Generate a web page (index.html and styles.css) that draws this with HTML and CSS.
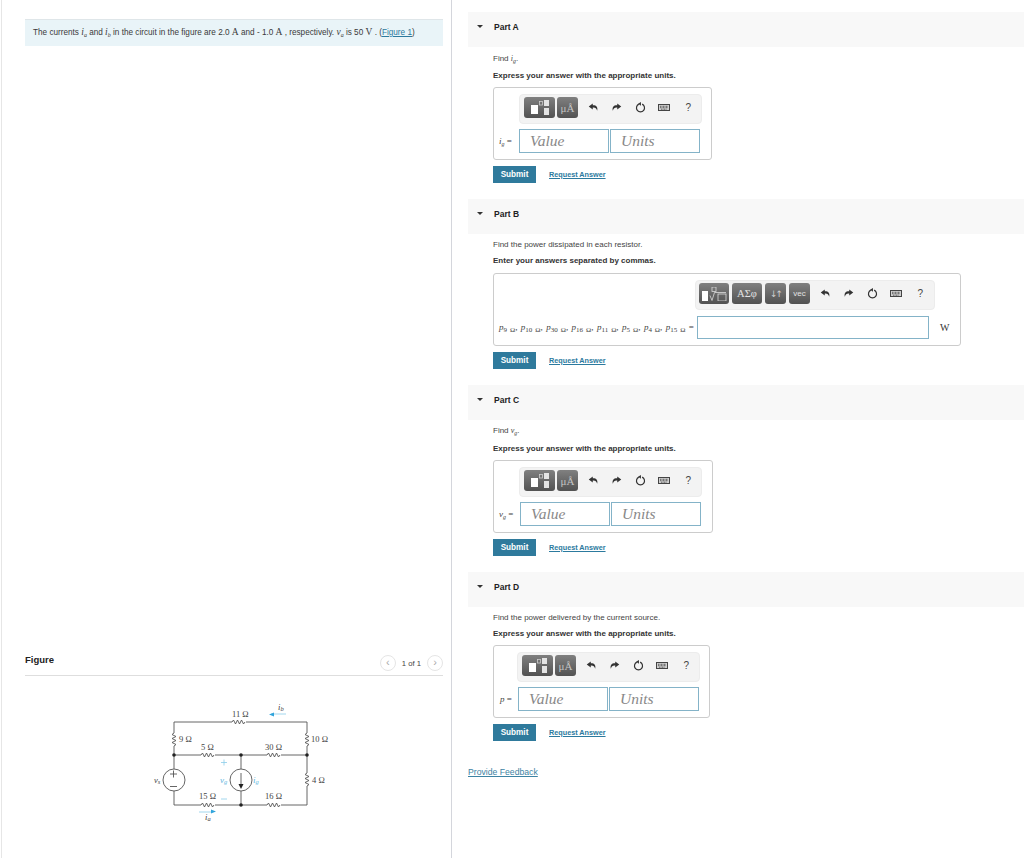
FILE: index.html
```html
<!DOCTYPE html>
<html lang="en">
<head>
<meta charset="utf-8">
<title>Circuit problem</title>
<link rel="stylesheet" href="styles.css">
</head>
<body>
<svg class="defs" width="0" height="0" aria-hidden="true">
  <symbol id="i-undo" viewBox="0 0 12 12"><path d="M5.2 1.6 0.8 5 5.2 8.2V6c2.4-.3 4 .6 4.8 3.6C11 5.6 9.200 3.500 5.200 3.600z"/></symbol>
  <symbol id="i-redo" viewBox="0 0 12 12"><path d="M6.800 1.600 11.200 5 6.800 8.200V6C4.400 5.700 2.800 6.600 2 9.600 1 5.600 2.800 3.500 6.800 3.600z"/></symbol>
  <symbol id="i-reset" viewBox="0 0 12 12"><path d="M4.200 2.300A4.400 4.400 0 1 0 7.800 2.300" fill="none" stroke="currentColor" stroke-width="1.300"/><path d="M6.500 0 6.500 4 3.400 2z"/></symbol>
  <symbol id="i-kbd" viewBox="0 0 12 7"><rect x=".5" y=".5" width="11" height="6" fill="#cfcfcf" stroke="#444"/><path d="M2 2.300h8M2 3.700h8M3 5.200h6" stroke="#444" stroke-width=".8" stroke-dasharray="1 .5"/></symbol>
  <symbol id="i-tpl" viewBox="0 0 18 15"><rect x="0" y="5" width="7" height="9" fill="#fff"/><rect x="8.500" y="1.500" width="3" height="3.500" fill="none" stroke="#ccc" stroke-width=".8"/><rect x="13" y="0" width="5" height="6" fill="#e4e4e4"/><rect x="13" y="8" width="5" height="7" fill="#e4e4e4"/></symbol>
  <symbol id="i-root" viewBox="0 0 26 14"><rect x="1" y="4" width="6" height="10" fill="#fff"/><rect x="11" y="0" width="4" height="4.500" fill="none" stroke="#ddd" stroke-width=".8"/><path d="M9 8.500 11 13.500 13.500 5.500H25" fill="none" stroke="#ddd" stroke-width=".8"/><rect x="17" y="7" width="8" height="7" fill="none" stroke="#ddd" stroke-width=".8"/></symbol>
</svg>

<div class="app">
  <section class="left">
    <div class="statement">
      <p>The currents <i class="m">i</i><sub class="m">a</sub> and <i class="m">i</i><sub class="m">b</sub> in the circuit in the figure are 2.0 <span class="u">A</span> and - 1.0 <span class="u">A</span> , respectively. <i class="m">v</i><sub class="m">a</sub> is 50 <span class="u">V</span> . (<a href="#figure">Figure 1</a>)</p>
    </div>
    <div class="figure" id="figure">
      <div class="figure-head">
        <h2>Figure</h2>
        <div class="pager">
          <span class="round">&lsaquo;</span>
          <span class="count">1 of 1</span>
          <span class="round">&rsaquo;</span>
        </div>
      </div>
      <svg class="circuit" width="220" height="135" viewBox="130 695 220 135">
        <g class="wire">
          <path d="M174 733V722H232M246 722H307V733M307 746V773M307 786V805H281M267 805H241M241 805H215M201 805H174V791M174 769V746M174 755H201M215 755H267M281 755H307M241 755V769M241 791V805"/>
          <path d="M232 722l1.500-2 2 4 2-4 2 4 2-4 2 4 1.500-2"/>
          <path d="M201 755l1.500-2 2 4 2-4 2 4 2-4 2 4 1.500-2"/>
          <path d="M267 755l1.500-2 2 4 2-4 2 4 2-4 2 4 1.500-2"/>
          <path d="M201 805l1.500-2 2 4 2-4 2 4 2-4 2 4 1.500-2"/>
          <path d="M267 805l1.500-2 2 4 2-4 2 4 2-4 2 4 1.500-2"/>
          <path d="M174 733l-2 1.500 4 2-4 2 4 2-4 2 4 2-2 1.500"/>
          <path d="M307 733l-2 1.500 4 2-4 2 4 2-4 2 4 2-2 1.500"/>
          <path d="M307 773l-2 1.500 4 2-4 2 4 2-4 2 4 2-2 1.500"/>
          <circle cx="174" cy="780" r="11"/>
          <circle cx="241" cy="780" r="11"/>
          <path d="M241 773V785"/>
          <path d="M170 774h7M173.500 770.500v7M170 786.500h7"/>
        </g>
        <path class="fill-dark" d="M238.500 784h5L241 789z"/>
        <circle class="fill-dark" cx="174" cy="755" r="1.800"/>
        <circle class="fill-dark" cx="241" cy="755" r="1.800"/>
        <circle class="fill-dark" cx="307" cy="755" r="1.800"/>
        <circle class="fill-dark" cx="241" cy="805" r="1.800"/>
        <g class="blue-line">
          <path d="M271 714H286"/>
          <path d="M199 812H212"/>
          <path d="M221 762.500h6M224 759.500v6M221 799h6"/>
        </g>
        <path class="fill-blue" d="M269 714.500l5-2v4zM216 811.500l-5-2v4z"/>
        <g class="lbl">
          <text x="232" y="717">11 Ω</text>
          <text x="179" y="742">9 Ω</text>
          <text x="311" y="742">10 Ω</text>
          <text x="201" y="750">5 Ω</text>
          <text x="265" y="750">30 Ω</text>
          <text x="199" y="799">15 Ω</text>
          <text x="265" y="799">16 Ω</text>
          <text x="312" y="783">4 Ω</text>
          <text class="it" x="154" y="783">v<tspan class="sb" dy="1">s</tspan></text>
          <text class="it" x="278" y="710">i<tspan class="sb" dy="1">b</tspan></text>
          <text class="it" x="205" y="820">i<tspan class="sb" dy="1">a</tspan></text>
          <text class="it cy" x="220" y="783">v<tspan class="sb" dy="1">g</tspan></text>
          <text class="it cy" x="253" y="783">i<tspan class="sb" dy="1">g</tspan></text>
        </g>
      </svg>
    </div>
  </section>

  <main class="right">
    <section class="part part-a">
      <div class="part-head"><span class="caret"></span><h3>Part A</h3></div>
      <div class="part-body">
        <p class="prompt">Find <i class="m">i</i><sub class="m">g</sub>.</p>
        <p class="instr">Express your answer with the appropriate units.</p>
        <div class="answer box-a">
          <div class="toolbar tb-unit">
            <span class="btn b-tpl"><svg width="18" height="15"><use href="#i-tpl"/></svg></span>
            <span class="btn b-mu">μÅ</span>
            <span class="tools"><svg class="t1" width="11" height="11"><use href="#i-undo"/></svg><svg class="t1" width="11" height="11"><use href="#i-redo"/></svg><svg class="t1" width="11" height="11"><use href="#i-reset"/></svg><svg class="t1" width="12" height="7"><use href="#i-kbd"/></svg><span class="q">?</span></span>
          </div>
          <div class="entry">
            <span class="lab"><i class="m">i</i><sub class="m">g</sub> =</span>
            <span class="field">Value</span>
            <span class="field">Units</span>
          </div>
        </div>
        <div class="actions"><button class="submit">Submit</button><a class="req" href="#a">Request Answer</a></div>
      </div>
    </section>

    <section class="part part-b">
      <div class="part-head"><span class="caret"></span><h3>Part B</h3></div>
      <div class="part-body">
        <p class="prompt">Find the power dissipated in each resistor.</p>
        <p class="instr">Enter your answers separated by commas.</p>
        <div class="answer box-b">
          <div class="toolbar tb-wide">
            <span class="btn b-root"><svg width="26" height="14"><use href="#i-root"/></svg></span>
            <span class="btn b-sym">ΑΣφ</span>
            <span class="btn b-arr">↓↑</span>
            <span class="btn b-vec">vec</span>
            <span class="tools"><svg class="t1" width="11" height="11"><use href="#i-undo"/></svg><svg class="t1" width="11" height="11"><use href="#i-redo"/></svg><svg class="t1" width="11" height="11"><use href="#i-reset"/></svg><svg class="t1" width="12" height="7"><use href="#i-kbd"/></svg><span class="q">?</span></span>
          </div>
          <div class="entry entry-b">
            <span class="lab lab-b"><i class="m">p</i><sub class="m">9 Ω</sub>, <i class="m">p</i><sub class="m">10 Ω</sub>, <i class="m">p</i><sub class="m">30 Ω</sub>, <i class="m">p</i><sub class="m">16 Ω</sub>, <i class="m">p</i><sub class="m">11 Ω</sub>, <i class="m">p</i><sub class="m">5 Ω</sub>, <i class="m">p</i><sub class="m">4 Ω</sub>, <i class="m">p</i><sub class="m">15 Ω</sub> =</span>
            <span class="field field-b"></span>
            <span class="unit-w">W</span>
          </div>
        </div>
        <div class="actions"><button class="submit">Submit</button><a class="req" href="#b">Request Answer</a></div>
      </div>
    </section>

    <section class="part part-c">
      <div class="part-head"><span class="caret"></span><h3>Part C</h3></div>
      <div class="part-body">
        <p class="prompt">Find <i class="m">v</i><sub class="m">g</sub>.</p>
        <p class="instr">Express your answer with the appropriate units.</p>
        <div class="answer box-c">
          <div class="toolbar tb-unit">
            <span class="btn b-tpl"><svg width="18" height="15"><use href="#i-tpl"/></svg></span>
            <span class="btn b-mu">μÅ</span>
            <span class="tools"><svg class="t1" width="11" height="11"><use href="#i-undo"/></svg><svg class="t1" width="11" height="11"><use href="#i-redo"/></svg><svg class="t1" width="11" height="11"><use href="#i-reset"/></svg><svg class="t1" width="12" height="7"><use href="#i-kbd"/></svg><span class="q">?</span></span>
          </div>
          <div class="entry">
            <span class="lab"><i class="m">v</i><sub class="m">g</sub> =</span>
            <span class="field">Value</span>
            <span class="field">Units</span>
          </div>
        </div>
        <div class="actions"><button class="submit">Submit</button><a class="req" href="#c">Request Answer</a></div>
      </div>
    </section>

    <section class="part part-d">
      <div class="part-head"><span class="caret"></span><h3>Part D</h3></div>
      <div class="part-body">
        <p class="prompt">Find the power delivered by the current source.</p>
        <p class="instr">Express your answer with the appropriate units.</p>
        <div class="answer box-d">
          <div class="toolbar tb-unit">
            <span class="btn b-tpl"><svg width="18" height="15"><use href="#i-tpl"/></svg></span>
            <span class="btn b-mu">μÅ</span>
            <span class="tools"><svg class="t1" width="11" height="11"><use href="#i-undo"/></svg><svg class="t1" width="11" height="11"><use href="#i-redo"/></svg><svg class="t1" width="11" height="11"><use href="#i-reset"/></svg><svg class="t1" width="12" height="7"><use href="#i-kbd"/></svg><span class="q">?</span></span>
          </div>
          <div class="entry">
            <span class="lab"><i class="m">p</i> =</span>
            <span class="field">Value</span>
            <span class="field">Units</span>
          </div>
        </div>
        <div class="actions"><button class="submit">Submit</button><a class="req" href="#d">Request Answer</a></div>
      </div>
    </section>

    <a class="feedback" href="#f">Provide Feedback</a>
  </main>
</div>
</body>
</html>
```

FILE: styles.css
```css
* { box-sizing: border-box; }
html, body { margin: 0; padding: 0; background: #fff; }
body { font-family: "Liberation Sans", Arial, sans-serif; color: #333; font-size: 8px; overflow: hidden; }
.defs { display: block; height: 0; }
p, h2, h3 { margin: 0; }
a { color: #2c7a9e; }
.app { display: flex; width: 1024px; height: 858px; }

.left { width: 451px; height: 858px; margin-left: 1px; border-left: 1px solid #e6e6e6; border-right: 1px solid #d4d6dc; padding: 19px 8px 0 23px; flex: none; display: flex; flex-direction: column; }
.statement { height: 27px; background: #e9f4f8; border-top: 1px solid #dfe6e9; padding: 0 8px 2px; display: flex; align-items: center; font-size: 8.200px; color: #3a3a3a; white-space: nowrap; }
.m { font-family: "Liberation Serif", serif; font-style: italic; }
.statement .m { font-size: 9.500px; }
sub.m { font-size: 6px !important; line-height: 0; vertical-align: -2px; font-style: italic; }
.u { font-family: "Liberation Serif", serif; font-size: 9.500px; }

.figure { margin-top: 606px; }
.figure-head { height: 24px; border-bottom: 1px solid #dedede; display: flex; justify-content: space-between; align-items: flex-start; }
.figure-head h2 { font-size: 9.500px; line-height: 16px; color: #222; }
.pager { display: flex; align-items: center; gap: 6px; margin-top: 3px; color: #444; font-size: 7.700px; }
.round { width: 16px; height: 16px; border: 1px solid #e5e5e5; border-radius: 50%; display: flex; align-items: center; justify-content: center; color: #aaa; font-size: 11px; line-height: 1; padding-bottom: 2px; }
.circuit { display: block; margin: 19px 0 0 105px; }
.wire { fill: none; stroke: #555; stroke-width: .9; }
.fill-dark { fill: #222; }
.fill-blue { fill: #31a4dc; }
.blue-line { stroke: #8ccdea; stroke-width: .8; fill: none; }
.lbl { font-family: "Liberation Serif", serif; font-size: 8.500px; fill: #444; }
.lbl .it { font-style: italic; }
.lbl .cy { fill: #5fb6de; font-size: 9px; }
.lbl .sb { font-size: 6.500px; }

.right { flex: 1; min-width: 0; padding: 12px 0 0 16px; display: flex; flex-direction: column; }
.part-head { height: 35px; background: #f8f8f8; display: flex; align-items: flex-start; padding: 10px 0 0 9px; }
.caret { width: 0; height: 0; border-left: 3px solid transparent; border-right: 3px solid transparent; border-top: 3.500px solid #333; margin: 3px 11px 0 0; }
.part-head h3 { font-size: 8.500px; line-height: 11px; color: #222; font-weight: bold; }
.part-body { padding-left: 25px; padding-top: 1px; }
.part-a .part-body { padding-top: 0; }
.prompt { font-size: 8px; line-height: 10px; color: #444; padding-top: 5px; }
.instr { font-size: 8px; line-height: 10px; font-weight: bold; color: #333; padding-top: 2px; }
.part-a .prompt { padding-top: 7px; height: 22px; }
.part-a .instr { height: 18px; }
.part-b .prompt { height: 19px; }
.part-b .instr { height: 19px; }
.part-c .prompt { height: 21px; }
.part-c .instr { height: 18px; }
.part-d .prompt { height: 19px; }
.part-d .instr { height: 18px; }

.answer { border: 1px solid #ccc; border-radius: 3px; height: 73px; padding: 6px 8px 0 6px; display: flex; flex-direction: column; align-items: flex-start; }
.box-a { width: 219px; padding-left: 25px; }
.box-b { width: 468px; padding-left: 5px; }
.box-c { width: 220px; padding-left: 25px; }
.box-d { width: 217px; padding-left: 23px; }

.toolbar { height: 30px; background: #f3f3f3; border: 1px solid #ececec; border-radius: 4px; display: flex; align-items: center; padding: 0 4px 3px; gap: 2px; }
.tb-unit { width: 183px; }
.tb-wide { width: 240px; margin-left: 196px; padding-left: 3px; gap: 3px; }
.btn { height: 21px; border-radius: 3px; background: linear-gradient(#808080, #525252); display: flex; align-items: center; justify-content: center; color: #e2e2e2; font-family: "Liberation Serif", serif; font-size: 10px; flex: none; }
.b-tpl { width: 31px; }
.b-mu { width: 21px; color: #c4c4c4; font-size: 11px; }
.b-root { width: 30px; }
.b-sym { width: 30px; font-size: 10.500px; }
.b-arr { width: 21px; font-family: "DejaVu Sans", sans-serif; font-size: 9px; color: #cfcfcf; letter-spacing: -2px; }
.b-vec { width: 21px; font-family: "Liberation Sans", sans-serif; font-size: 8px; }
.tools { display: flex; align-items: center; gap: 12.300px; margin-left: 8px; color: #333; fill: #333; }
.tb-wide .tools { margin-left: 7px; }
.t1 { display: block; fill: #333; color: #333; }
.q { font-size: 10px; margin-left: 1px; color: #444; width: 10px; text-align: center; }

.entry { display: flex; align-items: center; margin-top: 5px; height: 24px; }
.lab { font-family: "Liberation Serif", serif; font-size: 9px; color: #444; white-space: nowrap; }
.box-a .lab, .box-c .lab, .box-d .lab { margin-left: -22px; width: 22px; text-align: left; padding-left: 2px; }
.box-c .lab { width: 23px; }
.box-d .lab { width: 21px; margin-left: -20px; padding-left: 3px; }
.field { width: 90px; height: 24px; margin-right: 1px; border: 1px solid #84b3c8; background: #fff; font-family: "Liberation Serif", serif; font-style: italic; font-size: 15.500px; line-height: 22px; color: #888; padding-left: 10px; flex: none; }
.lab-b { width: 198px; font-size: 9px; word-spacing: 1.200px; }
.lab-b sub.m { font-size: 7px !important; font-style: normal; }
.field-b { width: 232px; height: 23px; margin: 0; }
.unit-w { font-family: "Liberation Serif", serif; font-size: 10px; margin-left: 11px; color: #333; }

.actions { display: flex; align-items: center; margin-top: 6px; height: 17px; }
.submit { width: 43px; height: 17px; background: #2f7a9c; color: #fff; border: 0; padding: 0; font-family: "Liberation Sans", sans-serif; font-size: 8.200px; font-weight: bold; }
.req { margin-left: 13px; font-size: 7.250px; font-weight: bold; color: #2c7a9e; }
.part-a { height: 187px; }
.part-b { height: 186px; }
.part-c { height: 187px; }
.part-d { height: 195px; }
.feedback { font-size: 8.670px; line-height: 11px; color: #3d83a3; width: 71px; }
```
